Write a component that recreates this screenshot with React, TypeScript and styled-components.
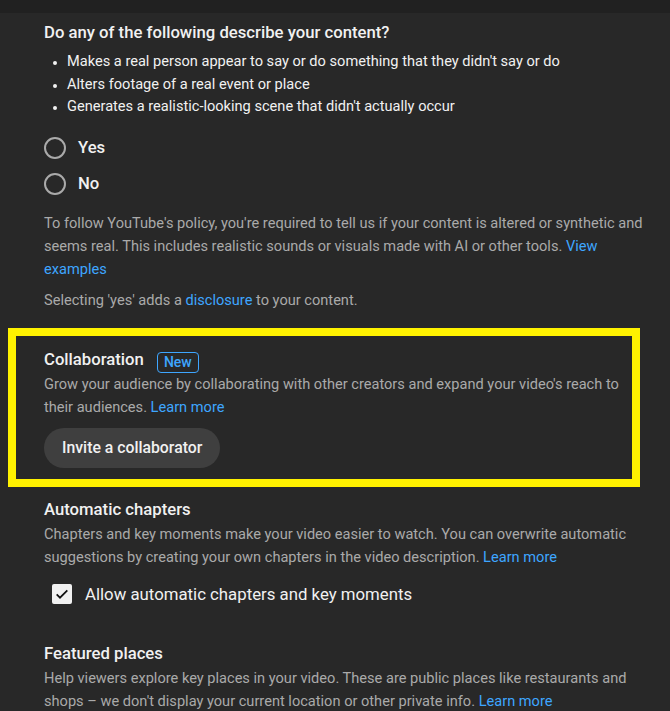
import React, { useState } from "react";
import styled, { createGlobalStyle } from "styled-components";

const GlobalStyle = createGlobalStyle`
  html, body {
    margin: 0;
    padding: 0;
    background: #282828;
  }
  body {
    font-family: Roboto, "Noto Sans", Arial, sans-serif;
    color: #f1f1f1;
  }
`;

const TopBand = styled.div`
  height: 13px;
  background: #212121;
`;

const Page = styled.div`
  display: flex;
  flex-direction: column;
  padding: 8px 0 0 44px;
  width: 606px;
`;

const Question = styled.h2`
  margin: 0;
  font-size: 16.7px;
  font-weight: 500;
  line-height: 24px;
  color: #f1f1f1;
`;

const BulletList = styled.ul`
  margin: 5px 0 0;
  padding: 0 0 0 23px;
  font-size: 14.6px;
  line-height: 22.5px;
  color: #f1f1f1;

  li::marker {
    font-size: 12px;
  }
`;

const RadioGroup = styled.div`
  display: flex;
  flex-direction: column;
  gap: 12px;
  margin-top: 18px;
`;

const RadioRow = styled.label`
  display: flex;
  align-items: center;
  gap: 12px;
  height: 24px;
  font-size: 16.7px;
  font-weight: 500;
  cursor: pointer;
`;

const RadioCircle = styled.span<{ checked: boolean }>`
  width: 18px;
  height: 18px;
  border-radius: 50%;
  border: 2px solid #aaaaaa;
  display: flex;
  align-items: center;
  justify-content: center;

  &::after {
    content: "";
    width: 10px;
    height: 10px;
    border-radius: 50%;
    background: ${(p) => (p.checked ? "#f1f1f1" : "transparent")};
  }
`;

const Help = styled.p<{ top?: number }>`
  margin: ${(p) => p.top ?? 0}px 0 0;
  font-size: 14.6px;
  line-height: 23px;
  color: #aaaaaa;
`;

const Link = styled.a`
  color: #3ea6ff;
  text-decoration: none;
  cursor: pointer;
`;

const Highlight = styled.section`
  display: flex;
  flex-direction: column;
  align-items: flex-start;
  margin: 16px 0 0 -36px;
  width: 632px;
  box-sizing: border-box;
  border: 8px solid #fff200;
  padding: 11px 0 11px 28px;
`;

const SectionTitle = styled.h3`
  margin: 0;
  display: flex;
  align-items: center;
  gap: 13px;
  font-size: 16.7px;
  font-weight: 500;
  line-height: 26px;
  color: #f1f1f1;
`;

const Badge = styled.span`
  box-sizing: border-box;
  height: 21px;
  margin-top: 5px;
  padding: 0 6px;
  font-size: 14px;
  font-weight: 500;
  line-height: 19px;
  color: #3ea6ff;
  border: 1px solid #3ea6ff;
  border-radius: 4px;
`;

const PillButton = styled.button`
  margin-top: 9px;
  height: 40px;
  padding: 0 18px;
  border: none;
  border-radius: 20px;
  background: #3f3f3f;
  color: #f1f1f1;
  font-family: inherit;
  font-size: 15.8px;
  font-weight: 500;
  cursor: pointer;
`;

const Section = styled.section<{ top: number }>`
  margin-top: ${(p) => p.top}px;
`;

const CheckRow = styled.label`
  display: flex;
  align-items: center;
  gap: 13px;
  height: 24px;
  margin: 13px 0 0 8px;
  font-size: 16.8px;
  font-weight: 400;
  color: #f1f1f1;
  cursor: pointer;
`;

const CheckBox = styled.span<{ checked: boolean }>`
  box-sizing: border-box;
  width: 20px;
  height: 20px;
  border-radius: 2px;
  background: ${(p) => (p.checked ? "#f1f1f1" : "transparent")};
  border: ${(p) => (p.checked ? "none" : "2px solid #aaaaaa")};
  display: flex;
  align-items: center;
  justify-content: center;
`;

export default function App() {
  const [answer, setAnswer] = useState<"yes" | "no" | null>(null);
  const [chapters, setChapters] = useState(true);

  return (
    <>
      <GlobalStyle />
      <TopBand />
      <Page>
        <Question>Do any of the following describe your content?</Question>
        <BulletList>
          <li>Makes a real person appear to say or do something that they didn't say or do</li>
          <li>Alters footage of a real event or place</li>
          <li>Generates a realistic-looking scene that didn't actually occur</li>
        </BulletList>

        <RadioGroup>
          <RadioRow onClick={() => setAnswer("yes")}>
            <RadioCircle checked={answer === "yes"} />
            Yes
          </RadioRow>
          <RadioRow onClick={() => setAnswer("no")}>
            <RadioCircle checked={answer === "no"} />
            No
          </RadioRow>
        </RadioGroup>

        <Help top={16}>
          To follow YouTube's policy, you're required to tell us if your content is altered or synthetic and
          seems real. This includes realistic sounds or visuals made with AI or other tools.{" "}
          <Link>View examples</Link>
        </Help>
        <Help top={8}>
          Selecting 'yes' adds a <Link>disclosure</Link> to your content.
        </Help>

        <Highlight>
          <SectionTitle>
            Collaboration <Badge>New</Badge>
          </SectionTitle>
          <Help>
            Grow your audience by collaborating with other creators and expand your video's reach to
            their audiences. <Link>Learn more</Link>
          </Help>
          <PillButton>Invite a collaborator</PillButton>
        </Highlight>

        <Section top={10}>
          <SectionTitle>Automatic chapters</SectionTitle>
          <Help>
            Chapters and key moments make your video easier to watch. You can overwrite automatic
            suggestions by creating your own chapters in the video description. <Link>Learn more</Link>
          </Help>
          <CheckRow onClick={() => setChapters(!chapters)}>
            <CheckBox checked={chapters}>
              {chapters && (
                <svg width="16" height="16" viewBox="0 0 24 24">
                  <path d="M4 12.5l5 5L20 6.5" fill="none" stroke="#0f0f0f" strokeWidth="2.6" />
                </svg>
              )}
            </CheckBox>
            Allow automatic chapters and key moments
          </CheckRow>
        </Section>

        <Section top={35}>
          <SectionTitle>Featured places</SectionTitle>
          <Help>
            Help viewers explore key places in your video. These are public places like restaurants and
            shops – we don't display your current location or other private info. <Link>Learn more</Link>
          </Help>
        </Section>
      </Page>
    </>
  );
}
